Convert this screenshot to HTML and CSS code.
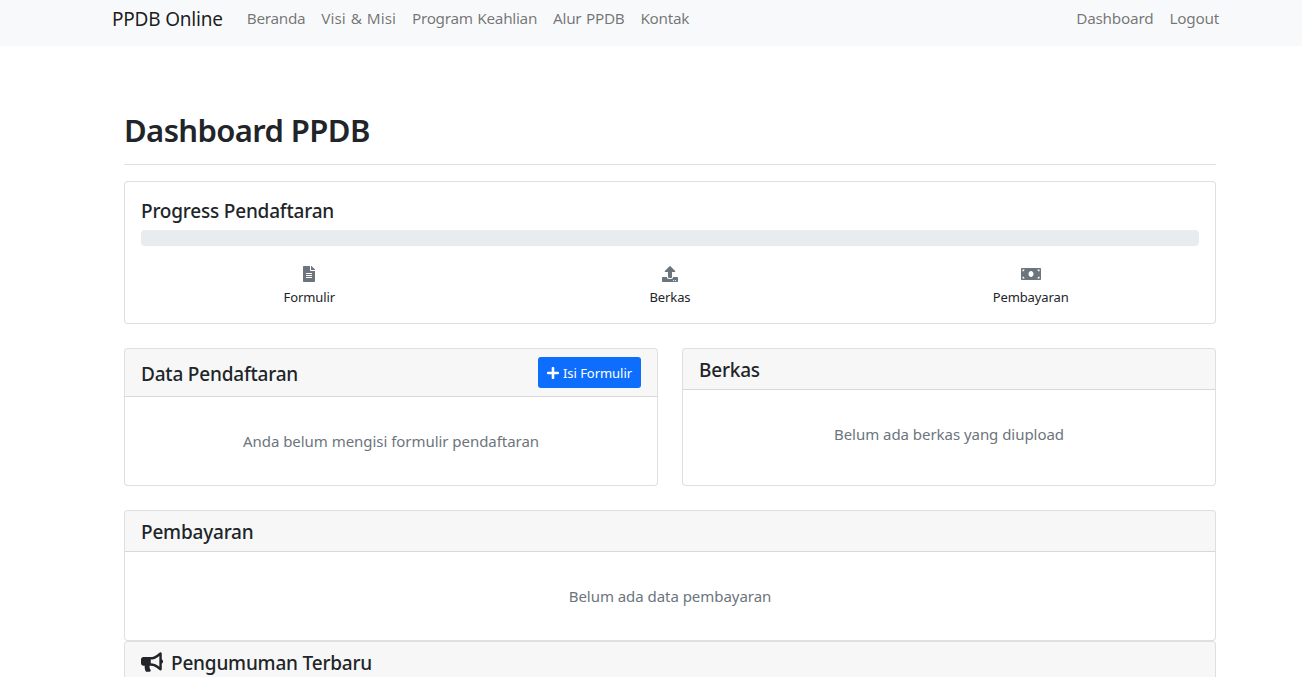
FILE: index.html
```html
<!DOCTYPE html>
<html lang="id">
<head>
<meta charset="utf-8">
<title>Dashboard PPDB</title>
<link rel="stylesheet" href="styles.css">
</head>
<body>
<nav class="navbar">
  <div class="nav-inner">
    <a class="brand" href="#">PPDB Online</a>
    <ul class="nav-links">
      <li><a href="#">Beranda</a></li>
      <li><a class="wide-words" href="#">Visi &amp; Misi</a></li>
      <li><a href="#">Program Keahlian</a></li>
      <li><a href="#">Alur PPDB</a></li>
      <li><a href="#">Kontak</a></li>
    </ul>
    <ul class="nav-links nav-right">
      <li><a href="#">Dashboard</a></li>
      <li><a href="#">Logout</a></li>
    </ul>
  </div>
</nav>
<main class="container">
  <h1 class="page-title">Dashboard PPDB</h1>
  <section class="card progress-card">
    <div class="card-body">
      <h2 class="card-title">Progress Pendaftaran</h2>
      <div class="progress"></div>
      <div class="steps">
        <div class="step">
          <svg class="step-icon" viewBox="0 0 384 512"><path d="M224 136V0H24C10.7 0 0 10.7 0 24v464c0 13.3 10.7 24 24 24h336c13.3 0 24-10.7 24-24V160H248c-13.2 0-24-10.8-24-24zm64 236c0 6.6-5.4 12-12 12H108c-6.6 0-12-5.4-12-12v-8c0-6.6 5.4-12 12-12h168c6.6 0 12 5.4 12 12v8zm0-64c0 6.6-5.4 12-12 12H108c-6.6 0-12-5.4-12-12v-8c0-6.6 5.4-12 12-12h168c6.6 0 12 5.4 12 12v8zm0-72v8c0 6.6-5.4 12-12 12H108c-6.6 0-12-5.4-12-12v-8c0-6.6 5.4-12 12-12h168c6.6 0 12 5.4 12 12zm96-114.1v6.1H256V0h6.1c6.4 0 12.5 2.5 17 7l97.9 98c4.5 4.5 7 10.6 7 16.9z"/></svg>
          <span class="step-label">Formulir</span>
        </div>
        <div class="step">
          <svg class="step-icon" viewBox="0 0 512 512"><path d="M296 384h-80c-13.3 0-24-10.7-24-24V192h-87.7c-17.8 0-26.7-21.5-14.1-34.1L242.3 5.7c7.5-7.5 19.8-7.5 27.3 0l152.2 152.2c12.6 12.6 3.7 34.1-14.1 34.1H320v168c0 13.3-10.7 24-24 24zm216-8v112c0 13.3-10.7 24-24 24H24c-13.3 0-24-10.7-24-24V376c0-13.3 10.7-24 24-24h136v8c0 30.9 25.1 56 56 56h80c30.9 0 56-25.1 56-56v-8h136c13.3 0 24 10.7 24 24zm-124 88c0-11-9-20-20-20s-20 9-20 20 9 20 20 20 20-9 20-20zm64 0c0-11-9-20-20-20s-20 9-20 20 9 20 20 20 20-9 20-20z"/></svg>
          <span class="step-label">Berkas</span>
        </div>
        <div class="step">
          <svg class="step-icon" viewBox="0 0 640 512"><path d="M608 64H32C14.33 64 0 78.33 0 96v320c0 17.67 14.33 32 32 32h576c17.67 0 32-14.33 32-32V96c0-17.67-14.33-32-32-32zM48 400v-64c35.35 0 64 28.65 64 64H48zm0-224v-64h64c0 35.35-28.65 64-64 64zm272 176c-44.19 0-80-43.03-80-96 0-53.02 35.82-96 80-96s80 42.98 80 96c0 52.99-35.83 96-80 96zm272 48h-64c0-35.35 28.65-64 64-64v64zm0-224c-35.35 0-64-28.65-64-64h64v64z"/></svg>
          <span class="step-label">Pembayaran</span>
        </div>
      </div>
    </div>
  </section>
  <div class="two-col">
    <section class="card">
      <header class="card-header header-with-action">
        <h2 class="card-title">Data Pendaftaran</h2>
        <a class="btn" href="#"><svg class="btn-icon" viewBox="0 0 448 512"><path d="M416 208H272V64c0-17.67-14.33-32-32-32h-32c-17.67 0-32 14.33-32 32v144H32c-17.67 0-32 14.33-32 32v32c0 17.67 14.33 32 32 32h144v144c0 17.67 14.33 32 32 32h32c17.67 0 32-14.33 32-32V304h144c17.67 0 32-14.33 32-32v-32c0-17.67-14.33-32-32-32z"/></svg>Isi Formulir</a>
      </header>
      <div class="card-body empty">Anda belum mengisi formulir pendaftaran</div>
    </section>
    <section class="card">
      <header class="card-header">
        <h2 class="card-title">Berkas</h2>
      </header>
      <div class="card-body empty">Belum ada berkas yang diupload</div>
    </section>
  </div>
  <section class="card payment-card">
    <header class="card-header">
      <h2 class="card-title">Pembayaran</h2>
    </header>
    <div class="card-body empty">Belum ada data pembayaran</div>
  </section>
  <section class="card">
    <header class="card-header">
      <h2 class="card-title title-icon"><svg class="horn" viewBox="0 0 576 512"><path d="M576 240c0-23.63-12.95-44.04-32-55.12V32.01C544 23.26 537.02 0 512 0c-7.12 0-14.19 2.38-19.98 7.02l-85.03 68.03C364.28 109.19 310.66 128 256 128H64c-35.35 0-64 28.65-64 64v96c0 35.35 28.65 64 64 64h33.7c-1.39 10.48-2.18 21.14-2.18 32 0 39.77 9.26 77.35 25.56 110.94 5.19 10.69 16.52 17.06 28.4 17.06h74.28c26.05 0 41.69-29.84 25.9-50.56-16.4-21.52-26.15-48.36-26.15-77.44 0-11.11 1.62-21.79 4.41-32H256c54.66 0 108.28 18.81 150.98 52.95l85.03 68.03a32.023 32.023 0 0 0 19.98 7.02c24.92 0 32-22.78 32-32V295.13C563.05 284.04 576 263.63 576 240zm-96 141.42l-33.05-26.44C392.95 311.78 325.12 288 256 288v-96c69.12 0 136.95-23.78 190.95-66.98L480 98.58v282.84z"/></svg>Pengumuman Terbaru</h2>
    </header>
  </section>
</main>
</body>
</html>
```
FILE: styles.css
```css
* { box-sizing: border-box; }
html, body { margin: 0; height: 677px; overflow: hidden; }
body {
  font-family: "Noto Sans", "Open Sans", sans-serif;
  font-size: 16px;
  line-height: 24px;
  color: #212529;
  background: #fff;
}
a { text-decoration: none; }
ul { list-style: none; margin: 0; padding: 0; }
h1, h2 { margin: 0; }

.navbar { background: #f8f9fa; height: 46px; }
.nav-inner {
  width: 1115px;
  margin-left: 112px;
  height: 36px;
  display: flex;
  align-items: center;
}
.brand { font-size: 19px; color: rgba(0,0,0,.9); margin-right: 16px; letter-spacing: -.2px; padding-top: 1px; }
.nav-links { display: flex; }
.nav-links a { display: block; padding: 0 8px; font-size: 15.3px; color: rgba(0,0,0,.55); letter-spacing: -.3px; word-spacing: 1px; }
.nav-links .wide-words { letter-spacing: 0; }
.nav-right { margin-left: auto; }
.nav-right li a { letter-spacing: -.22px; }

.container { width: 1092px; margin-left: 124px; padding-top: 47px; }
.page-title {
  font-size: 31px;
  line-height: 38px;
  font-weight: 600;
  letter-spacing: -.6px;
  padding: 18px 0 15px;
  border-bottom: 1px solid #dee2e6;
  margin-bottom: 16px;
}

.card { border: 1px solid rgba(0,0,0,.125); border-radius: 4px; background: #fff; overflow: hidden; }
.card-body { padding: 16px; }
.card-title { font-size: 19px; line-height: 24px; font-weight: 500; letter-spacing: -.2px; padding-top: 1px; margin-bottom: -1px; }
.card-header { padding: 8px 16px; background: rgba(0,0,0,.03); border-bottom: 1px solid rgba(0,0,0,.125); }
.header-with-action { display: flex; justify-content: space-between; align-items: center; }

.progress-card { height: 143px; }
.progress { height: 16px; margin-top: 8px; background: #e9ecef; border-radius: 4px; }
.steps { display: grid; grid-template-columns: repeat(3, 1fr); gap: 24px; margin-top: 20px; }
.step { display: flex; flex-direction: column; align-items: center; }
.step-icon { height: 16px; width: auto; fill: #6c757d; display: block; margin-bottom: 5px; }
.step-label { font-size: 13px; line-height: 20px; color: #212529; letter-spacing: -.1px; }

.two-col { display: grid; grid-template-columns: 534px 534px; gap: 24px; margin-top: 24px; }
.empty { text-align: center; color: #6c757d; font-size: 15px; padding: 32px 16px; letter-spacing: -.04px; }

.btn {
  display: flex;
  align-items: center;
  height: 31px;
  padding: 0 9px;
  background: #0d6efd;
  color: #fff;
  border-radius: 3px;
  font-size: 13px;
  letter-spacing: -.05px;
}
.btn-icon { height: 14px; width: 12px; fill: #fff; margin-right: 4px; }

.payment-card { margin-top: 24px; height: 131px; }
.title-icon { display: flex; align-items: center; gap: 8px; }
.horn { height: 20px; width: 22px; fill: #212529; margin-bottom: 2px; }
```
